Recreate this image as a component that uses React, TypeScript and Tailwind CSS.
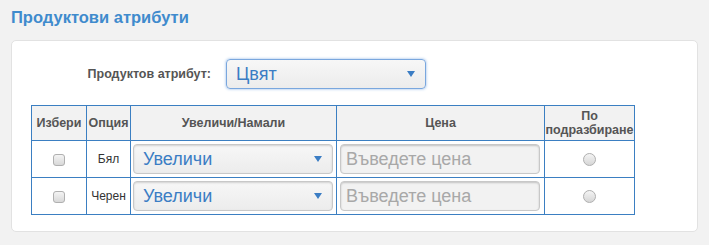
import React from "react";

const Arrow = () => (
  <svg width="8" height="6" viewBox="0 0 8 6" className="absolute right-[10px] top-1/2 -translate-y-1/2">
    <path d="M0 0 L8 0 L4 6 Z" fill="#3b7dc4" />
  </svg>
);

const FakeSelect = ({ value, focused }: { value: string; focused?: boolean }) => (
  <div
    className={
      "relative w-[200px] h-[30px] rounded-[4px] bg-gradient-to-b from-[#f7f7f7] to-[#ececec] flex items-center pl-[9px] text-[18px] text-[#3b7dc4] " +
      (focused
        ? "border border-[#7aa7de] shadow-[0_0_3px_#8fb6e6]"
        : "border border-[#c8c8c8] shadow-[inset_0_1px_2px_rgba(0,0,0,0.15)]")
    }
  >
    {value}
    <Arrow />
  </div>
);

const PriceInput = () => (
  <input
    placeholder="Въведете цена"
    className="w-[200px] h-[30px] rounded-[4px] border border-[#c8c8c8] bg-[#f2f2f2] shadow-[inset_0_1px_2px_rgba(0,0,0,0.2)] px-[5px] text-[18px] text-[#555] placeholder:text-[#a8a8a8] outline-none"
  />
);

const rows = ["Бял", "Черен"];

export default function App() {
  return (
    <div className="min-h-[245px] bg-[#f2f2f2] px-[11px] pt-[7px] font-['Liberation_Sans',Arial,sans-serif]">
      <h2 className="text-[16.5px] font-bold text-[#3f8bcd] leading-[20px] mb-[13px]">Продуктови атрибути</h2>
      <div className="bg-white border border-[#e2e2e2] rounded-[5px] h-[192px] pt-[18px] pl-[19px]">
        <div className="flex items-center">
          <label className="w-[180px] text-right text-[12.5px] font-bold text-[#555]">Продуктов атрибут:</label>
          <div className="ml-[15px]">
            <FakeSelect value="Цвят" focused />
          </div>
        </div>
        <table className="mt-[16px] border-collapse table-fixed w-[603px] text-[12px]">
          <colgroup>
            <col className="w-[55px]" />
            <col className="w-[44px]" />
            <col className="w-[206px]" />
            <col className="w-[208px]" />
            <col className="w-[90px]" />
          </colgroup>
          <thead>
            <tr className="h-[35px] bg-[#f2f2f2] text-[#555] font-bold text-[12.5px]">
              <th className="border border-[#3b7fc2] px-0 leading-[14px]">Избери</th>
              <th className="border border-[#3b7fc2] px-0 leading-[14px]">Опция</th>
              <th className="border border-[#3b7fc2] leading-[14px]">Увеличи/Намали</th>
              <th className="border border-[#3b7fc2] leading-[14px]">Цена</th>
              <th className="border border-[#3b7fc2] leading-[14px] px-0">
                По
                <br />
                подразбиране
              </th>
            </tr>
          </thead>
          <tbody>
            {rows.map((r) => (
              <tr key={r} className="h-[37px]">
                <td className="border border-[#3b7fc2] text-center">
                  <span className="inline-block w-[12px] h-[12px] rounded-[3px] border border-[#b0b0b0] bg-gradient-to-b from-[#f4f4f4] to-[#d8d8d8] align-middle" />
                </td>
                <td className="border border-[#3b7fc2] text-center text-[#333]">{r}</td>
                <td className="border border-[#3b7fc2] px-[2px]">
                  <FakeSelect value="Увеличи" />
                </td>
                <td className="border border-[#3b7fc2] px-[3px]">
                  <PriceInput />
                </td>
                <td className="border border-[#3b7fc2] text-center">
                  <span className="inline-block w-[13px] h-[13px] rounded-full border border-[#b0b0b0] bg-gradient-to-b from-[#f4f4f4] to-[#d6d6d6] align-middle" />
                </td>
              </tr>
            ))}
          </tbody>
        </table>
      </div>
    </div>
  );
}
